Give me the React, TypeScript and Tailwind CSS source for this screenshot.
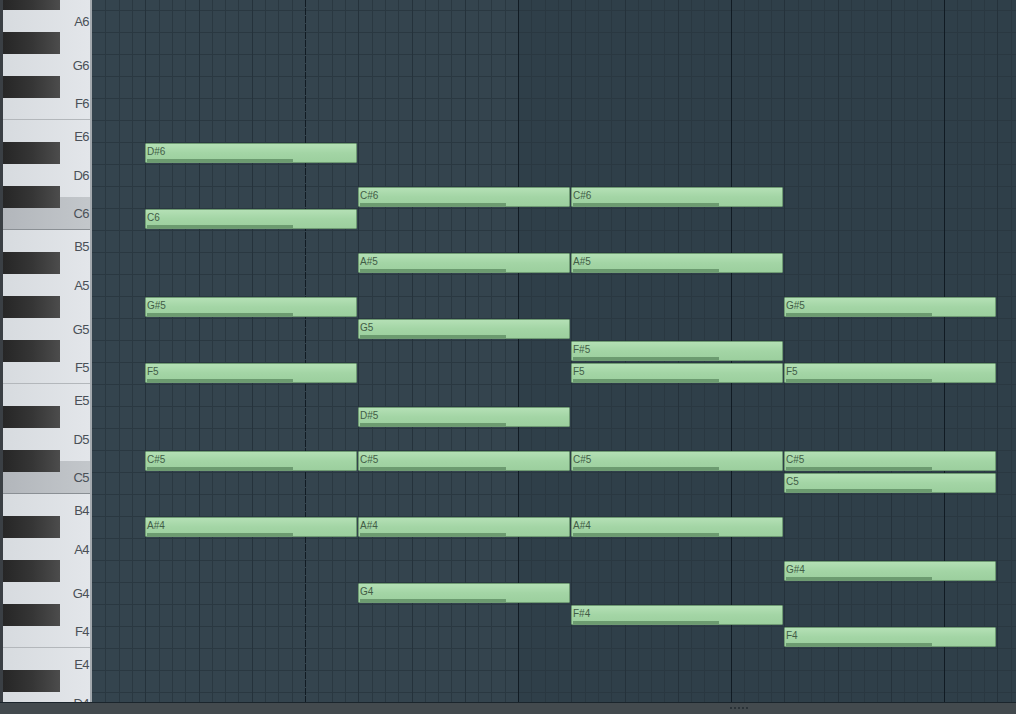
import React from "react";

const NAMES = ["C", "C#", "D", "D#", "E", "F", "F#", "G", "G#", "A", "A#", "B"];
const TOP_MIDI = 10 + 12 * 6; // A#6
const ROW = 22;
const ROW_OFFSET = -12;
const CELL = 213 / 16;
const BAR = 213;

function rowOf(name: string) {
  const m = name.match(/^([A-G]#?)(\d)$/)!;
  const semi = NAMES.indexOf(m[1]) + 12 * parseInt(m[2]);
  return TOP_MIDI - semi;
}

const COLS: string[][] = [
  ["D#6", "C6", "G#5", "F5", "C#5", "A#4"],
  ["C#6", "A#5", "G5", "D#5", "C#5", "A#4", "G4"],
  ["C#6", "A#5", "F#5", "F5", "C#5", "A#4", "F#4"],
  ["G#5", "F5", "C#5", "C5", "G#4", "F4"],
];

const WHITE_H: Record<string, number> = { C: 33, D: 44, E: 33, F: 33, G: 44, A: 44, B: 33 };
const WHITE_KEYS = [
  "A6", "G6", "F6", "E6", "D6", "C6",
  "B5", "A5", "G5", "F5", "E5", "D5", "C5",
  "B4", "A4", "G4", "F4", "E4", "D4",
];
const BLACK_KEYS = [
  "A#6", "G#6", "F#6", "D#6", "C#6",
  "A#5", "G#5", "F#5", "D#5", "C#5",
  "A#4", "G#4", "F#4", "D#4",
];

function Keyboard() {
  return (
    <div className="relative w-[92px] shrink-0 h-full overflow-hidden bg-[#3b4045] border-l-[3px] border-[#3a3f44]">
      <div className="flex flex-col mt-[-1px] border-r-2 border-[#a3a9ae]">
        {WHITE_KEYS.map((k) => {
          const letter = k[0];
          const isC = letter === "C";
          const isF = letter === "F";
          return (
            <div
              key={k}
              style={{ height: WHITE_H[letter] }}
              className={
                "flex items-center justify-end pr-[1px] shrink-0 box-border " +
                (isC
                  ? "bg-gradient-to-r from-[#b2b6bb] to-[#c3c7cb] border-b border-[#8a8f94]"
                  : isF
                  ? "bg-gradient-to-r from-[#d7dbdf] to-[#e3e6ea] border-b border-[#b3b7bb]"
                  : "bg-gradient-to-r from-[#d7dbdf] to-[#e3e6ea]")
              }
            >
              <span className="font-['Liberation_Sans',Arial,sans-serif] text-[13px] leading-none tracking-[-0.6px] text-[#4a5057]">
                {k}
              </span>
            </div>
          );
        })}
      </div>
      {BLACK_KEYS.map((k) => (
        <div
          key={k}
          className="absolute left-0 w-[57px] h-[22px] bg-gradient-to-r from-[#262626] via-[#353535] to-[#4c4c4c]"
          style={{ top: ROW_OFFSET + ROW * rowOf(k) }}
        />
      ))}
    </div>
  );
}

function GridSvg() {
  const W = 924;
  const H = 702;
  const barShades = ["#34444e", "#34444e", "#2f3f49", "#2f3f49", "#2f3f49"];
  const verts = [];
  for (let k = 1; k * CELL < W; k++) {
    const x = Math.round(k * CELL) + 0.5;
    let color = "#2a3841";
    let dash: string | undefined;
    if (k % 16 === 0) {
      color = "#111b23";
      if (k === 16) dash = "7 1";
    } else if (k % 4 === 0) color = "#25323b";
    verts.push(
      <line key={"v" + k} x1={x} x2={x} y1={0} y2={H} stroke={color} strokeWidth={1} strokeDasharray={dash} />
    );
  }
  const hors = [];
  for (let k = 0; ROW_OFFSET + ROW * k < H; k++) {
    const y = ROW_OFFSET + ROW * k + 0.5;
    if (y < 0) continue;
    hors.push(<line key={"h" + k} x1={0} x2={W} y1={y} y2={y} stroke="#2a3841" strokeWidth={1} />);
  }
  return (
    <svg width={W} height={H} className="absolute inset-0 block" shapeRendering="crispEdges">
      {barShades.map((c, i) => (
        <rect key={i} x={i * BAR} y={0} width={BAR} height={H} fill={c} />
      ))}
      {hors}
      {verts}
    </svg>
  );
}

function Note({ name, col }: { name: string; col: number }) {
  const left = Math.round(4 * CELL + col * BAR);
  const top = ROW_OFFSET + ROW * rowOf(name) + 1;
  return (
    <div
      className="absolute h-[20px] w-[212px] box-border border border-[#6f9b73] rounded-[1px] bg-gradient-to-b from-[#b4e0b5] via-[#a3d5a5] to-[#9ccf9e] overflow-hidden"
      style={{ left, top }}
    >
      <div className="pl-[1px] pt-[3px] font-['Liberation_Sans',Arial,sans-serif] text-[10px] leading-none text-[#425c46]">
        {name}
      </div>
      <div className="absolute left-[1px] top-[15px] h-[3px] w-[146px] bg-[#6c9b70]" />
    </div>
  );
}

export default function App() {
  return (
    <div className="w-[1016px] h-[714px] flex flex-col bg-[#2f3f49] overflow-hidden">
      <div className="flex h-[702px] shrink-0">
        <Keyboard />
        <div className="relative flex-1 h-full overflow-hidden">
          <GridSvg />
          {COLS.map((list, col) => list.map((n) => <Note key={col + n} name={n} col={col} />))}
        </div>
      </div>
      <div className="relative h-[12px] shrink-0 bg-[#434a4e] border-t border-[#1b252c]">
        <div className="absolute left-[730px] top-[4px] flex gap-[2px]">
          {[0, 1, 2, 3, 4].map((i) => (
            <div key={i} className="w-[2px] h-[2px] bg-[#2a3237]" />
          ))}
        </div>
      </div>
    </div>
  );
}
